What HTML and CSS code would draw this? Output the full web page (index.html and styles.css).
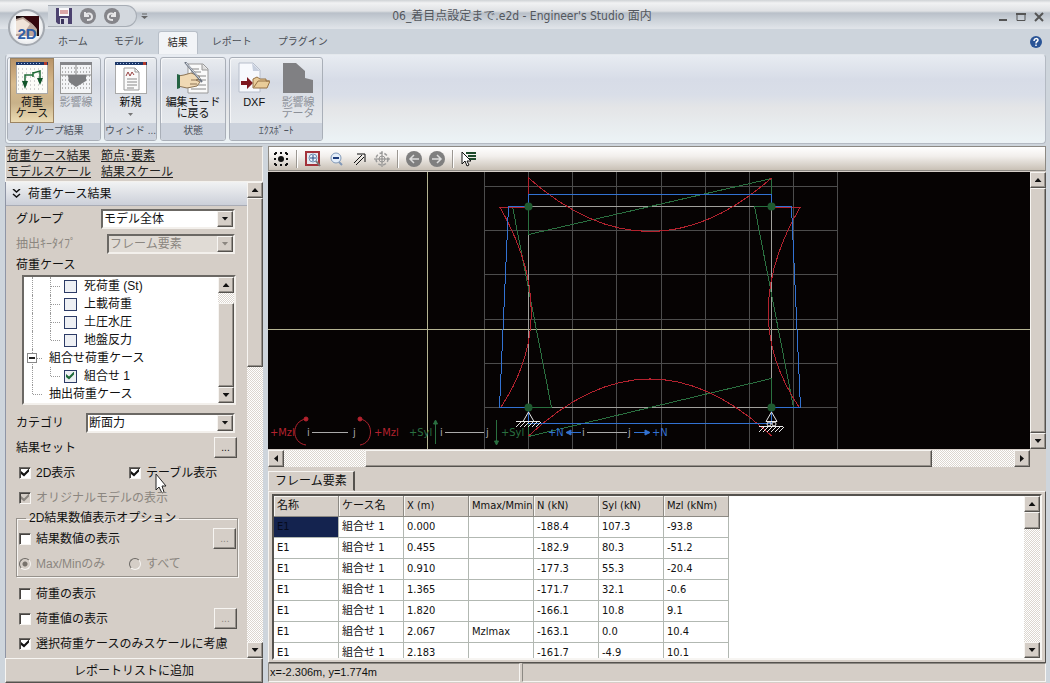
FILE: index.html
```
<!DOCTYPE html>
<html lang="ja">
<head>
    <meta charset="UTF-8">
    <meta name="viewport" content="width=device-width, initial-scale=1.0">
    <title>Engineer's Studio 面内</title>
    <link rel="stylesheet" href="styles.css">
</head>
<body>
    <header class="top">
        <button class="orb" aria-label="アプリケーション">
            <svg width="26" height="26" viewBox="0 0 26 26">
                <rect x="2" y="1" width="23" height="20" fill="#1c0d0f"/>
                <path d="M2 4L9 2L17 7L23 14V21H2Z" fill="#bda79b"/>
                <path d="M2 6L9 4L16 9L10 18L2 19Z" fill="#efe3d8"/>
                <path d="M10 1H25V16L20 10L12 4Z" fill="#35080d"/>
                <text x="13" y="24" text-anchor="middle" class="orb-text">2D</text>
            </svg>
        </button>
        <div class="titlebar">
            <div class="quick">
                <button aria-label="保存">
                    <svg width="16" height="16" viewBox="0 0 16 16"><path d="M0 0H16V16H2L0 14Z" fill="#4c426f"/><rect x="3" y="0" width="10" height="8" fill="#f8f8fa"/><path d="M4 3H12M4 5H12" stroke="#b55" /><rect x="4" y="10" width="8" height="6" fill="#d8d8e2"/><rect x="5" y="11" width="3" height="5" fill="#39335c"/></svg>
                </button>
                <button aria-label="元に戻す">
                    <svg width="16" height="16" viewBox="0 0 16 16"><circle cx="8" cy="8" r="8" fill="#85858a"/><path d="M5 4V8H9M5 8C7 4 12 5 12 9C12 11 10 12 7 12" fill="none" stroke="#e6e6e8" stroke-width="2"/></svg>
                </button>
                <button aria-label="やり直し">
                    <svg width="16" height="16" viewBox="0 0 16 16"><circle cx="8" cy="8" r="8" fill="#85858a"/><path d="M11 4V8H7M11 8C9 4 4 5 4 9C4 11 6 12 9 12" fill="none" stroke="#e6e6e8" stroke-width="2"/></svg>
                </button>
            </div>
            <button class="quick-more" aria-label="カスタマイズ">
                <svg width="7" height="7" viewBox="0 0 7 7"><path d="M1 1H6" stroke="#666"/><path d="M0 3H7L3.500 6Z" fill="#666"/></svg>
            </button>
            <h1>06_着目点設定まで.e2d - Engineer's Studio 面内</h1>
            <div class="win-buttons">
                <button aria-label="最小化"><svg width="10" height="10" viewBox="0 0 10 10"><path d="M1 8H9" stroke="#555" stroke-width="2"/></svg></button>
                <button aria-label="最大化"><svg width="10" height="10" viewBox="0 0 10 10"><path d="M1 2.500H9V8.500H1Z" fill="none" stroke="#555"/><path d="M0 2H10" stroke="#555" stroke-width="2"/></svg></button>
                <button aria-label="閉じる"><svg width="10" height="10" viewBox="0 0 10 10"><path d="M1 1L9 9M9 1L1 9" stroke="#555" stroke-width="2"/></svg></button>
            </div>
        </div>
        <nav class="tabs">
            <a href="#">ホーム</a>
            <a href="#">モデル</a>
            <a href="#" class="active">結果</a>
            <a href="#">レポート</a>
            <a href="#">プラグイン</a>
            <button class="help" aria-label="ヘルプ">
                <svg width="12" height="12" viewBox="0 0 12 12"><circle cx="6" cy="6" r="6" fill="#2a5496"/><path d="M4 5C4 2 8 2 8 4C8 6 6 5 6 7.500M6 8.500V10" fill="none" stroke="#fff" stroke-width="1.500"/></svg>
            </button>
        </nav>
        <div class="ribbon">
            <section class="group">
                <div class="group-body">
                    <button class="big on">
                        <svg width="32" height="32" viewBox="0 0 32 32"><rect x=".5" y=".5" width="31" height="31" fill="#fcfcf8" stroke="#aaa"/><rect width="32" height="3" fill="#1d3869"/><path d="M2 1.500H26" stroke="#a9c0e4" stroke-dasharray="1 2"/><rect x="28" width="3" height="3" fill="#b43a2c"/><path d="M2 7H30M2 11H30M2 15H30M2 19H30M2 23H30M2 27H30" stroke="#aaa" stroke-dasharray="1 3"/><path d="M9 21V13H17V11L24 9V18M17 10V15" fill="none" stroke="#1e6a35" stroke-width="1.500"/><path d="M6 19H12L9 27ZM21 16H27L24 23Z" fill="#12552a"/></svg>
                        <span>荷重<br>ケース</span>
                    </button>
                    <button class="big" disabled>
                        <svg width="32" height="32" viewBox="0 0 32 32"><rect x=".5" y=".5" width="31" height="31" fill="#f3f4f6" stroke="#999"/><rect width="32" height="3" fill="#85868a"/><path d="M2 6H30M2 10H30M2 14H30M2 18H30M2 22H30M2 26H30" stroke="#777" stroke-dasharray="1 2"/><path d="M16 3V13M1 13H31" stroke="#888"/><path d="M8 13H26V19L16 25L9 20Z" fill="#7c7d80"/></svg>
                        <span>影響線</span>
                    </button>
                </div>
                <h2>グループ結果</h2>
            </section>
            <section class="group">
                <div class="group-body">
                    <button class="big">
                        <svg width="32" height="32" viewBox="0 0 32 32"><rect x=".5" y=".5" width="31" height="31" fill="#fff" stroke="#aaa"/><rect width="32" height="3" fill="#1d3869"/><path d="M2 1.500H26" stroke="#a9c0e4" stroke-dasharray="1 2"/><rect x="28" width="3" height="3" fill="#b43a2c"/><path d="M9 6H20L24 10V28H9Z" fill="#fafafa" stroke="#999"/><path d="M20 6V10H24" fill="none" stroke="#999"/><path d="M11 14L13 10L15 14L17 10L19 13" fill="none" stroke="#944"/><path d="M12 17H22M12 20H22M12 23H22M12 26H19" stroke="#888"/></svg>
                        <span>新規</span>
                        <svg class="drop" width="5" height="3" viewBox="0 0 5 3"><path d="M0 0H5L2.500 3Z" fill="#777"/></svg>
                    </button>
                </div>
                <h2>ウィンド ...</h2>
            </section>
            <section class="group">
                <div class="group-body">
                    <button class="big wide">
                        <svg width="32" height="32" viewBox="0 0 32 32"><path d="M11 2H26L31 7V31H11Z" fill="#fafafa" stroke="#999"/><path d="M25 2V8H31" fill="#ddd" stroke="#999"/><path d="M14 7H22M14 10H24M22 14H29M22 18H29M20 23H29M14 27H29" stroke="#888"/><path d="M1 14L7 13L14 11L22 14L23 17L19 18L23 20L20 24L10 26L1 24Z" fill="#f0d9b4" stroke="#8d7556"/><path d="M14 18H22M13 22H20" stroke="#8d7556"/><path d="M0 12L3 13V26L0 27Z" fill="#256343"/><path d="M8 0L25 20" stroke="#6b7380" stroke-width="2"/><path d="M9 1L23 17" stroke="#d8dde4"/></svg>
                        <span>編集モード<br>に戻る</span>
                    </button>
                </div>
                <h2>状態</h2>
            </section>
            <section class="group">
                <div class="group-body">
                    <button class="big">
                        <svg width="32" height="32" viewBox="0 0 32 32"><path d="M1 1H15L22 8V30H1Z" fill="#f7f9fd" stroke="#b7becb"/><path d="M14 1L15 9H22Z" fill="#c7cfde"/><path d="M3 19H9V15L15 21L9 27V23H3Z" fill="#7d1720"/><path d="M15 25V17L19 15L22 17H28V19H32L29 26H15Z" fill="#e9cc99" stroke="#947044"/><path d="M16 25L20 19H31" fill="none" stroke="#947044"/></svg>
                        <span>DXF</span>
                    </button>
                    <button class="big" disabled>
                        <svg width="32" height="32" viewBox="0 0 32 32"><path d="M1 1H14L23 9V16L31 18V31H1Z" fill="#808083"/></svg>
                        <span>影響線<br>データ</span>
                    </button>
                </div>
                <h2>ｴｸｽﾎﾟｰﾄ</h2>
            </section>
        </div>
    </header>

    <div class="body">
        <aside class="side">
            <nav class="links">
                <a href="#">荷重ケース結果</a><a href="#">節点･要素</a>
                <a href="#">モデルスケール</a><a href="#">結果スケール</a>
            </nav>
            <div class="side-scroll">
                <div class="panel">
                    <h2 class="panel-head">
                        <svg width="9" height="9" viewBox="0 0 9 9"><path d="M1 0L4.500 3L8 0M1 5L4.500 8L8 5" fill="none" stroke="#111" stroke-width="1.500"/></svg>
                        荷重ケース結果
                    </h2>
                    <div class="form">
                        <div class="row">
                            <label for="group">グループ</label>
                            <div class="combo w-group"><select id="group"><option>モデル全体</option></select><span class="arrow down"></span></div>
                        </div>
                        <div class="row off">
                            <label for="key">抽出ｷｰﾀｲﾌﾟ</label>
                            <div class="combo w-key"><select id="key" disabled><option>フレーム要素</option></select><span class="arrow down"></span></div>
                        </div>
                        <div class="row-label">荷重ケース</div>
                        <div class="tree">
                            <ul>
                                <li><i class="rail"></i><i class="rail twig"></i><input type="checkbox" id="c1"><label for="c1">死荷重 (St)</label></li>
                                <li><i class="rail"></i><i class="rail twig"></i><input type="checkbox" id="c2"><label for="c2">上載荷重</label></li>
                                <li><i class="rail"></i><i class="rail twig"></i><input type="checkbox" id="c3"><label for="c3">土圧水圧</label></li>
                                <li><i class="rail"></i><i class="rail twig end"></i><input type="checkbox" id="c4"><label for="c4">地盤反力</label></li>
                                <li><i class="rail twig node"></i><span>組合せ荷重ケース</span></li>
                                <li><i class="rail"></i><i class="rail twig end"></i><input type="checkbox" id="c5" checked><label for="c5">組合せ 1</label></li>
                                <li><i class="rail twig end"></i><span>抽出荷重ケース</span></li>
                            </ul>
                            <div class="vbar">
                                <button class="arrow up" aria-label="上へ"></button>
                                <div class="track short"></div>
                                <div class="thumb grow"></div>
                                <button class="arrow down" aria-label="下へ"></button>
                            </div>
                        </div>
                        <div class="row">
                            <label for="cat">カテゴリ</label>
                            <div class="combo w-cat"><select id="cat"><option>断面力</option></select><span class="arrow down"></span></div>
                        </div>
                        <div class="row">
                            <span>結果セット</span>
                            <button class="dots">...</button>
                        </div>
                        <div class="row pair">
                            <label class="check"><input type="checkbox" checked>2D表示</label>
                            <label class="check"><input type="checkbox" checked>テーブル表示
                                <svg class="pointer" width="12" height="21" viewBox="0 0 12 21"><path d="M1 1V17L4 14L7 20L9 19L7 13H11Z" fill="#fff" stroke="#222"/></svg>
                            </label>
                        </div>
                        <div class="row off">
                            <label class="check"><input type="checkbox" checked disabled>オリジナルモデルの表示</label>
                        </div>
                        <fieldset>
                            <legend>2D結果数値表示オプション</legend>
                            <div class="row">
                                <label class="check"><input type="checkbox">結果数値の表示</label>
                                <button class="dots" disabled>...</button>
                            </div>
                            <div class="row pair off">
                                <label class="check"><input type="radio" name="mm" checked disabled>Max/Minのみ</label>
                                <label class="check"><input type="radio" name="mm" disabled>すべて</label>
                            </div>
                        </fieldset>
                        <div class="row">
                            <label class="check"><input type="checkbox">荷重の表示</label>
                        </div>
                        <div class="row">
                            <label class="check"><input type="checkbox">荷重値の表示</label>
                            <button class="dots" disabled>...</button>
                        </div>
                        <div class="row">
                            <label class="check"><input type="checkbox" checked>選択荷重ケースのみスケールに考慮</label>
                        </div>
                    </div>
                </div>
                <div class="vbar">
                    <button class="arrow up" aria-label="上へ"></button>
                    <div class="thumb tall"></div>
                    <div class="track grow"></div>
                    <button class="arrow down" aria-label="下へ"></button>
                </div>
            </div>
            <button class="add">レポートリストに追加</button>
        </aside>

        <main class="main">
            <div class="toolbar">
                <button aria-label="全体"><svg width="16" height="16" viewBox="0 0 16 16"><path d="M2 2H14V14H2Z" fill="none" stroke="#111" stroke-width="2" stroke-dasharray="2 3 2 3 2 0"/><circle cx="8" cy="8" r="3" fill="#111"/></svg></button>
                <hr>
                <button aria-label="窓拡大"><svg width="16" height="16" viewBox="0 0 16 16"><rect x="1" y="1" width="13" height="13" fill="#e4e9f0" stroke="#a3323a" stroke-width="2"/><circle cx="8" cy="7" r="4" fill="#e8f1fa" stroke="#6f8fb5"/><path d="M8 4V10M5 7H11" stroke="#2d4f86"/><path d="M11 10L15 15" stroke="#777" stroke-width="2"/></svg></button>
                <button aria-label="縮小"><svg width="16" height="16" viewBox="0 0 16 16"><circle cx="8" cy="7" r="5" fill="#e4eefa" stroke="#8299b8"/><path d="M5 7H11" stroke="#1d3b7a" stroke-width="2"/><path d="M11 11L14 14" stroke="#8299b8" stroke-width="2"/></svg></button>
                <button aria-label="移動"><svg width="16" height="16" viewBox="0 0 16 16"><path d="M3 12L11 4M5 14L13 6M6 3H14V11" fill="none" stroke="#111"/></svg></button>
                <button aria-label="中心" disabled><svg width="16" height="16" viewBox="0 0 16 16"><circle cx="8" cy="8" r="6" fill="none" stroke="#999" stroke-width="1.500" stroke-dasharray="3 2"/><circle cx="8" cy="8" r="3" fill="none" stroke="#999"/><path d="M8 0V16M0 8H16" stroke="#888"/></svg></button>
                <hr>
                <button aria-label="戻る" disabled><svg width="16" height="16" viewBox="0 0 16 16"><circle cx="8" cy="8" r="8" fill="#7f7f7f"/><path d="M13 8H4M8 4L4 8L8 12" fill="none" stroke="#ddd" stroke-width="1.500"/></svg></button>
                <button aria-label="進む" disabled><svg width="16" height="16" viewBox="0 0 16 16"><circle cx="8" cy="8" r="8" fill="#7f7f7f"/><path d="M3 8H12M8 4L12 8L8 12" fill="none" stroke="#ddd" stroke-width="1.500"/></svg></button>
                <hr>
                <button aria-label="選択"><svg width="16" height="16" viewBox="0 0 16 16"><path d="M5 2H15M7 5H15M8 8H15" stroke="#1d4a2b" stroke-width="2"/><path d="M1 1V13L4 10L6 15L8 14L6 10H10Z" fill="#fff" stroke="#111"/></svg></button>
            </div>

            <div class="view">
                <svg class="canvas" viewBox="268 172 762 277" preserveAspectRatio="xMinYMin slice">
                    <g class="grid">
                        <path d="M484.500 172V449M528.500 172V449M572.500 172V449M616.500 172V449M661.500 172V449M705.500 172V449M749.500 172V449M793.500 172V449M837.500 172V449"/>
                        <path d="M484 186.500H838M484 230.500H838M484 274.500H838M484 319.500H838M484 363.500H838M484 407.500H838"/>
                    </g>
                    <path class="axis" d="M268 329.500H1031M427.500 172V449"/>
                    <rect class="frame" x="528.500" y="206.500" width="243" height="201"/>
                    <g class="shear">
                        <path d="M528.500 206V234.500L771.500 178.500V206"/>
                        <path d="M528.500 206.500H512.500L551.500 407.500H528.500"/>
                        <path d="M771.500 206.500H754.500L793.500 407.500H771.500"/>
                        <path d="M528.500 407V436.500L771.500 378.500V407"/>
                    </g>
                    <g class="moment">
                        <path d="M528.500 206V178Q650 285 771.500 178"/>
                        <path d="M528 207.500H500Q562 315 501 407"/>
                        <path d="M772 207.500H800Q737 315 799 407"/>
                        <path d="M528.500 436Q650 322 771.500 436"/>
                    </g>
                    <g class="axial">
                        <path d="M528.500 206V194.500H771.500V206"/>
                        <path d="M528 206.500H508.500L499.500 407.500H528"/>
                        <path d="M772 206.500H791.500L800.500 407.500H772"/>
                        <path d="M528.500 407V423.500H771.500V407"/>
                    </g>
                    <g class="nodes">
                        <circle cx="528.500" cy="206.500" r="4"/>
                        <circle cx="771.500" cy="206.500" r="4"/>
                        <circle cx="528.500" cy="407.500" r="4"/>
                        <circle cx="771.500" cy="407.500" r="4"/>
                    </g>
                    <g class="support">
                        <path d="M528.500 412L523 421.500H534ZM516 421.500H540"/>
                        <path d="M516 427l5-5m-1 5l5-5m-1 5l5-5m-1 5l5-5m-1 5l5-5m-1 5l5-5"/>
                        <path d="M771.500 412L766 421.500H777ZM759 426.500H783"/>
                        <circle cx="769" cy="424" r="2"/><circle cx="774" cy="424" r="2"/>
                        <path d="M759 432l5-5m-1 5l5-5m-1 5l5-5m-1 5l5-5m-1 5l5-5m-1 5l5-5"/>
                    </g>
                    <g class="legend">
                        <path d="M312 432.500H348M445 432.500H484M587 432.500H627"/>
                        <text x="307" y="436">i</text><text x="353" y="436">j</text>
                        <text x="440" y="436">i</text><text x="486" y="436">j</text>
                        <text x="582" y="436">i</text><text x="628" y="436">j</text>
                    </g>
                    <g class="legend red">
                        <text x="270" y="436">+Mzl</text><text x="374" y="436">+Mzl</text>
                        <path d="M306 419C291 421 291 443 306 445M360 419C374 421 374 443 360 445"/>
                        <circle cx="306" cy="419" r="2"/><circle cx="360" cy="419" r="2"/>
                    </g>
                    <g class="legend green">
                        <text x="409" y="436">+Syl</text><text x="501" y="436">+Syl</text>
                        <path d="M435.500 444V421M433.500 424L435.500 420L437.500 424ZM496.500 420V443M494.500 441L496.500 445L498.500 441Z"/>
                    </g>
                    <g class="legend blue">
                        <text x="548" y="436">+N</text><text x="652" y="436">+N</text>
                        <path d="M581 432.500H567M571 430L566 432.500L571 435ZM634 432.500H648M645 430L650 432.500L645 435Z"/>
                    </g>
                </svg>
                <div class="vbar">
                    <button class="arrow up" aria-label="上へ"></button>
                    <div class="thumb grow"></div>
                    <button class="arrow down" aria-label="下へ"></button>
                </div>
                <div class="hbar">
                    <button class="arrow left" aria-label="左へ"></button>
                    <div class="track h-before"></div>
                    <div class="thumb grow"></div>
                    <div class="track h-after"></div>
                    <button class="arrow right" aria-label="右へ"></button>
                </div>
            </div>

            <div class="sheet">
                <button class="sheet-tab">フレーム要素</button>
                <div class="sheet-page">
                    <div class="sheet-box">
                        <div class="sheet-rows">
                            <table>
                                <thead>
                                    <tr><th>名称</th><th>ケース名</th><th>X (m)</th><th>Mmax/Mmin</th><th>N (kN)</th><th>Syl (kN)</th><th>Mzl (kNm)</th></tr>
                                </thead>
                                <tbody>
                                    <tr><td class="selected">E1</td><td>組合せ 1</td><td>0.000</td><td></td><td>-188.4</td><td>107.3</td><td>-93.8</td></tr>
                                    <tr><td>E1</td><td>組合せ 1</td><td>0.455</td><td></td><td>-182.9</td><td>80.3</td><td>-51.2</td></tr>
                                    <tr><td>E1</td><td>組合せ 1</td><td>0.910</td><td></td><td>-177.3</td><td>55.3</td><td>-20.4</td></tr>
                                    <tr><td>E1</td><td>組合せ 1</td><td>1.365</td><td></td><td>-171.7</td><td>32.1</td><td>-0.6</td></tr>
                                    <tr><td>E1</td><td>組合せ 1</td><td>1.820</td><td></td><td>-166.1</td><td>10.8</td><td>9.1</td></tr>
                                    <tr><td>E1</td><td>組合せ 1</td><td>2.067</td><td>Mzlmax</td><td>-163.1</td><td>0.0</td><td>10.4</td></tr>
                                    <tr><td>E1</td><td>組合せ 1</td><td>2.183</td><td></td><td>-161.7</td><td>-4.9</td><td>10.1</td></tr>
                                </tbody>
                            </table>
                        </div>
                        <div class="vbar">
                            <button class="arrow up" aria-label="上へ"></button>
                            <div class="thumb small"></div>
                            <div class="track grow"></div>
                            <button class="arrow down" aria-label="下へ"></button>
                        </div>
                    </div>
                </div>
            </div>

            <footer class="status">
                <div>x=-2.306m, y=1.774m</div>
                <div></div>
            </footer>
        </main>
    </div>
</body>
</html>
```
FILE: styles.css
```
* {
    margin: 0;
    padding: 0;
    box-sizing: border-box;
}

body {
    height: 100vh;
    display: flex;
    flex-direction: column;
    overflow: hidden;
    font-family: "Liberation Sans", "Noto Sans CJK JP", sans-serif;
    font-size: 12px;
    line-height: 16px;
    color: #111;
    background: #ced5dc;
}

button,
select,
input {
    font: inherit;
    color: inherit;
    border: none;
    background: none;
}

svg {
    display: block;
}

h1,
h2 {
    font-size: 12px;
    font-weight: normal;
}

/* title bar */
.top {
    position: relative;
}

.titlebar {
    display: flex;
    align-items: center;
    height: 29px;
    padding: 3px 6px 0 48px;
    background: linear-gradient(#cfd2d5 0, #f1f2f3 3px, #dfe1e4 11px, #b9c0c9 13px, #ccd2d9 20px, #dfe3e8 28px);
}

.orb {
    position: absolute;
    left: 8px;
    top: 9px;
    width: 37px;
    height: 37px;
    padding-left: 4px;
    border: 2px solid #a4a9b0;
    border-radius: 50%;
    background: radial-gradient(#fff 40%, #d5d8dc);
}

.orb-text {
    font: bold 15px "Liberation Sans", sans-serif;
    fill: #2f5fa8;
}

.quick {
    display: flex;
    gap: 8px;
    width: 89px;
    height: 22px;
    padding: 2px 8px;
    border: 1px solid #a7adb5;
    border-left: none;
    border-radius: 0 11px 11px 0;
    background: #d3d8de;
}

.quick-more {
    margin-left: 4px;
}

h1 {
    flex: 1;
    margin-right: 102px;
    text-align: center;
    font-family: "DejaVu Sans Condensed", "DejaVu Sans", "Noto Sans CJK JP", sans-serif;
    color: #53575d;
}

.win-buttons {
    display: flex;
    gap: 8px;
    padding-top: 2px;
}

/* ribbon */
.tabs {
    display: flex;
    align-items: flex-end;
    height: 25px;
    padding-left: 46px;
    background: #cdd4dc;
    font-size: 10px;
}

.tabs a {
    height: 23px;
    margin-right: 2px;
    padding: 0 12px;
    line-height: 22px;
    color: #4a4e55;
    text-decoration: none;
}

.tabs .active {
    padding: 0 9px;
    border: 1px solid #b8bfc8;
    border-bottom: none;
    border-radius: 3px 3px 0 0;
    background: #f2f4f7;
    color: #222;
}

.help {
    align-self: center;
    margin: 0 8px 0 auto;
}

.ribbon {
    display: flex;
    gap: 3px;
    height: 90px;
    margin: 0 4px 0 5px;
    padding: 2px 1px;
    border: 1px solid #b4bac3;
    border-top-color: #e4e8ed;
    border-radius: 4px;
    background: linear-gradient(#e8ecf2, #d7dce7 28%, #d9dee8 45%, #e4e5e7 60%, #ecf3f6);
}

.group {
    display: flex;
    flex-direction: column;
    border: 1px solid #a9afb8;
    border-radius: 3px;
    background: linear-gradient(#e9ecf0, #d5dae4 30%, #e0e3e8 60%, #e9edf0);
    box-shadow: inset 1px 1px #f5f6f8;
    overflow: hidden;
}

.group-body {
    display: flex;
    justify-content: center;
    flex: 1;
    padding: 0 2px;
}

.group h2 {
    height: 17px;
    line-height: 15px;
    text-align: center;
    font-size: 10px;
    color: #4d535c;
    background: #ccd2dc;
    white-space: nowrap;
}

.big {
    width: 44px;
    padding-top: 4px;
    display: flex;
    flex-direction: column;
    align-items: center;
    font-size: 11px;
    line-height: 11px;
    white-space: nowrap;
}

.big span {
    margin-top: 3px;
}

.big.wide {
    width: 60px;
}

.big.on {
    border: 1px solid #9c8462;
    padding-top: 3px;
    background: linear-gradient(#b89468, #d8bb8e 40%, #c8b189 70%, #ecdcb4);
}

.big:disabled {
    color: #8c9098;
}

.drop {
    margin-top: 5px;
}

/* left side */
.body {
    flex: 1;
    display: flex;
    gap: 5px;
    min-height: 0;
    padding: 2px 4px 0 5px;
}

.side {
    display: flex;
    flex-direction: column;
    flex: 0 0 258px;
    background: #d5cec7;
}

.links {
    display: grid;
    grid-template-columns: 94px 1fr;
    height: 36px;
    padding: 1px 1px;
    border: 1px solid #f4f2ee;
    border-top-color: #9a9a98;
}

.links a {
    color: #222;
    text-decoration: underline;
}

.side-scroll {
    display: flex;
    flex: 1;
    min-height: 0;
}

.panel {
    flex: 1;
    overflow: hidden;
    border-left: 1px solid #8f95a5;
}

.panel-head {
    display: flex;
    align-items: center;
    gap: 7px;
    height: 24px;
    padding-left: 6px;
    border-bottom: 1px solid #a9acb6;
    background: linear-gradient(#f1f2f3, #ccd0d9);
}

.form {
    padding: 0 9px 0 10px;
}

.row {
    display: flex;
    align-items: center;
    justify-content: space-between;
    height: 25px;
    white-space: nowrap;
}

.row-label {
    height: 19px;
    line-height: 19px;
}

.off {
    color: #8b8680;
}

.combo {
    display: flex;
    height: 20px;
    margin-right: 3px;
    border: 2px solid;
    border-color: #6b6864 #f3f0ec #f3f0ec #6b6864;
    background: #fff;
}

.combo select {
    flex: 1;
    min-width: 0;
    padding-left: 1px;
    appearance: none;
}

.combo select:disabled {
    opacity: 1;
    background: #e0dbd5;
}

.w-group {
    width: 134px;
}

.w-key {
    width: 128px;
}

.w-cat {
    width: 149px;
}

/* classic bevelled arrows and scroll bars */
.arrow,
.thumb,
.dots,
.add {
    border: 1px solid;
    border-color: #f7f5f2 #55524e #55524e #f7f5f2;
    background: #d5cec7;
    box-shadow: inset -1px -1px #96918b;
}

.arrow {
    display: flex;
    align-items: center;
    justify-content: center;
    flex: 0 0 16px;
    min-width: 16px;
    min-height: 16px;
}

.arrow::before {
    content: "";
    width: 7px;
    height: 4px;
    background: #111;
    clip-path: polygon(0 0, 100% 0, 50% 100%);
}

.up::before {
    clip-path: polygon(0 100%, 100% 100%, 50% 0);
}

.left::before {
    width: 4px;
    height: 7px;
    clip-path: polygon(100% 0, 100% 100%, 0 50%);
}

.right::before {
    width: 4px;
    height: 7px;
    clip-path: polygon(0 0, 0 100%, 100% 50%);
}

.off .arrow::before {
    background: #8b8680;
}

.vbar {
    display: flex;
    flex-direction: column;
    width: 16px;
}

.hbar {
    display: flex;
    height: 17px;
}

.track {
    background: repeating-conic-gradient(#fff 0 25%, #dcd6cf 0 50%) 0 0 / 2px 2px;
}

.grow {
    flex: 1;
}

.track.short {
    height: 10px;
}

.thumb.tall {
    height: 169px;
}

.thumb.small {
    height: 17px;
}

/* load case tree */
.tree {
    display: flex;
    height: 130px;
    margin: 0 2px 5px 6px;
    border: 2px solid;
    border-color: #6b6864 #f3f0ec #f3f0ec #6b6864;
    background: #fff;
}

.tree ul {
    flex: 1;
    list-style: none;
    padding-left: 8px;
}

.tree li {
    display: flex;
    align-items: center;
    height: 18px;
}

.rail {
    position: relative;
    align-self: flex-start;
    width: 18px;
    height: 18px;
    border-left: 1px dotted #999;
}

.twig::before {
    content: "";
    display: block;
    width: 9px;
    height: 9px;
    border-bottom: 1px dotted #999;
}

.rail.end {
    height: 9px;
}

.node::after {
    content: "";
    position: absolute;
    left: -6px;
    top: 4px;
    width: 8px;
    height: 8px;
    border: 1px solid #888;
    background: linear-gradient(#222, #222) center / 6px 2px no-repeat #fff;
}

.tree .rail + .rail {
    width: 14px;
}

.tree .rail:first-child {
    flex: 0 0 17px;
}

.tree .rail:first-child + .rail {
    margin-left: 1px;
}

input[type="checkbox"] {
    appearance: none;
    flex: none;
    width: 12px;
    height: 12px;
    border: 1px solid;
    border-color: #6b6864 #f7f5f2 #f7f5f2 #6b6864;
    box-shadow: inset 1px 1px #45423f;
    background: #fff;
}

input[type="checkbox"]:checked::before {
    content: "";
    display: block;
    width: 8px;
    height: 8px;
    margin: 1px;
    background: #111;
    clip-path: polygon(0 30%, 38% 62%, 100% 0, 100% 38%, 38% 100%, 0 68%);
}

input[type="checkbox"]:disabled {
    background: #d5cec7;
}

input[type="checkbox"]:disabled::before {
    background: #8b8680;
}

.tree input[type="checkbox"] {
    width: 13px;
    height: 13px;
    margin-right: 7px;
    border-color: #2c3b66;
    box-shadow: none;
    background: #eef0f4;
}

.tree input[type="checkbox"]:checked::before {
    background: #1f6a3a;
}

input[type="radio"] {
    appearance: none;
    width: 12px;
    height: 12px;
    border: 1px solid;
    border-color: #6b6864 #f7f5f2 #f7f5f2 #6b6864;
    border-radius: 50%;
}

input[type="radio"]:checked {
    background: radial-gradient(#77726c 2px, transparent 3px);
}

.check {
    position: relative;
    display: flex;
    align-items: center;
    gap: 5px;
    padding-left: 3px;
}

.pair .check:first-child {
    flex: 0 0 110px;
}

.pair {
    justify-content: flex-start;
}

.pointer {
    position: absolute;
    left: 29px;
    top: 8px;
}

.dots {
    width: 23px;
    height: 21px;
    margin-right: 1px;
    font-size: 10px;
    line-height: 18px;
}

.dots:disabled {
    color: #8b8680;
}

fieldset {
    margin-bottom: 4px;
    padding: 0 0 0 2px;
    border: 1px solid #96918b;
    box-shadow: 1px 1px #f7f5f2, inset 1px 1px #f7f5f2;
}

fieldset .check {
    padding-left: 0;
}

legend {
    margin-left: 7px;
    padding: 0 3px;
}

.add {
    height: 25px;
}

/* drawing area */
.main {
    flex: 1;
    min-width: 0;
    display: flex;
    flex-direction: column;
    background: #d5cec7;
}

.toolbar {
    display: flex;
    align-items: center;
    gap: 7px;
    height: 25px;
    margin-bottom: 1px;
    padding: 0 4px;
    border: 1px solid #8c8983;
    background: linear-gradient(#fff, #f2efec 40%, #c9c1b6);
}

.toolbar hr {
    width: 2px;
    height: 18px;
    margin: 0;
    border: none;
    border-left: 1px solid #9b9791;
    border-right: 1px solid #fff;
}

.view {
    flex: 1;
    min-height: 0;
    display: grid;
    grid-template-columns: 1fr 16px;
    grid-template-rows: minmax(0, 1fr) 17px;
    row-gap: 1px;
}

.canvas {
    width: 100%;
    height: 100%;
    background: #060303;
    fill: none;
}

.h-before {
    width: 81px;
}

.h-after {
    width: 82px;
}

.grid {
    stroke: #4c4c4c;
}

.axis {
    stroke: #b4b492;
}

.frame {
    stroke: #a0a09c;
}

.shear {
    stroke: #2a7040;
}

.moment {
    stroke: #b3222e;
}

.axial {
    stroke: #3272d2;
}

.shear,
.moment,
.axial {
    shape-rendering: crispEdges;
}

.nodes {
    fill: #1f5a30;
}

.support {
    stroke: #e8e8e8;
}

.legend {
    stroke: #aaa;
}

.legend text {
    font: 11px "DejaVu Sans Condensed", "DejaVu Sans", sans-serif;
    stroke: none;
    fill: #aaa;
}

.red {
    stroke: #b3222e;
}

.red text,
.red circle {
    fill: #b3222e;
}

.green {
    stroke: #2a7040;
}

.green text,
.green path {
    fill: #2a7040;
}

.blue {
    stroke: #3272d2;
}

.blue text,
.blue path {
    fill: #3272d2;
}

/* result table */
.sheet {
    flex: 0 0 196px;
    min-height: 0;
    display: flex;
    flex-direction: column;
    align-items: stretch;
    padding-top: 4px;
}

.sheet-tab {
    align-self: flex-start;
    height: 20px;
    padding: 0 6px;
    border: 1px solid;
    border-color: #f7f5f2 #55524e transparent #f7f5f2;
    border-right-width: 2px;
}

.sheet-page {
    flex: 1;
    min-height: 0;
    display: flex;
    padding: 2px 3px;
    border: 1px solid;
    border-color: #f7f5f2 #55524e #55524e #f7f5f2;
}

.sheet-box {
    flex: 1;
    display: flex;
    min-width: 0;
    border: 2px solid;
    border-color: #55524e #f7f5f2 #f7f5f2 #55524e;
    background: #fff;
}

.sheet-rows {
    flex: 1;
    overflow: hidden;
}

table {
    width: 455px;
    table-layout: fixed;
    border-collapse: separate;
    border-spacing: 0;
    font-family: "DejaVu Sans Condensed", "DejaVu Sans", "Noto Sans CJK JP", sans-serif;
    font-size: 11px;
}

th,
td {
    height: 21px;
    padding: 0 3px;
    border-right: 1px solid #b2b8b2;
    border-bottom: 1px solid #b2b8b2;
    text-align: left;
    font-weight: normal;
    line-height: 16px;
    white-space: nowrap;
}

th {
    border-color: #8c8983;
    background: #d5cec7;
    box-shadow: inset 1px 1px #f7f5f2;
}

.selected {
    background: #14234f;
    color: #060b1e;
}

.status {
    display: flex;
    gap: 2px;
    height: 20px;
    padding-bottom: 1px;
    font-size: 11px;
}

.status div {
    flex: 1;
    padding-left: 1px;
    border: 1px solid;
    border-color: #8c8983 #f7f5f2 #f7f5f2 #8c8983;
}

.status div:first-child {
    flex: 0 0 252px;
}
```
